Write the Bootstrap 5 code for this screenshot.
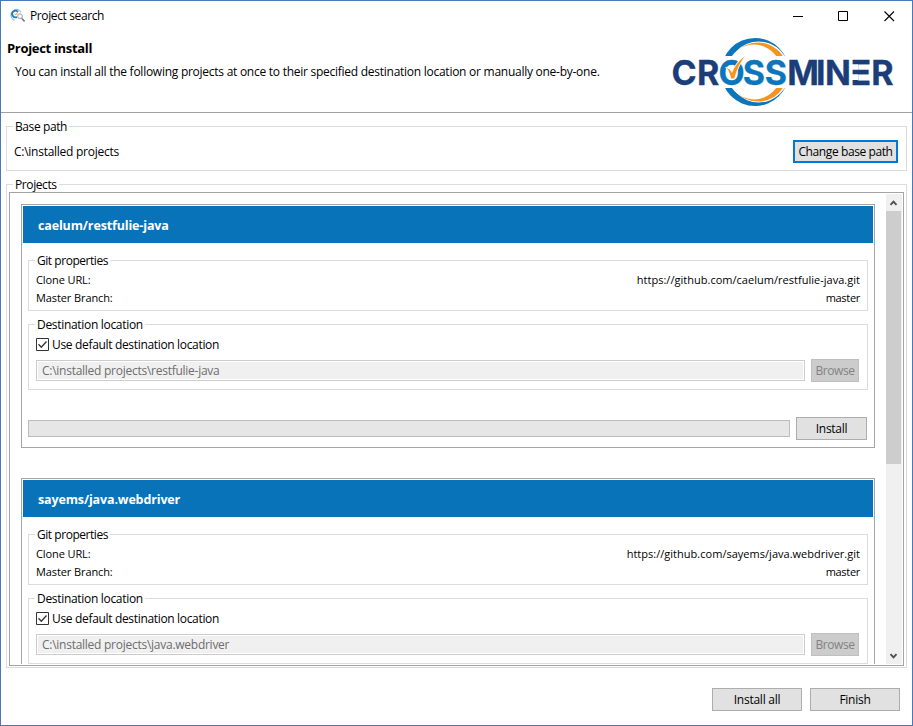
<!DOCTYPE html>
<html lang="en">
<head>
<meta charset="utf-8">
<title>Project search</title>
<link href="https://cdn.jsdelivr.net/npm/bootstrap@5.3.0/dist/css/bootstrap.min.css" rel="stylesheet">
<style>
  body { font: 12px/17px "Open Sans", "Noto Sans", sans-serif; color: #000; background: #fff; letter-spacing: -.26px; }
  .window { width: 913px; height: 726px; border: 1px solid #447abd; }
  .titlebar { height: 30px; padding: 0 17px 0 8px; line-height: 16px; }
  .titlebar span { letter-spacing: -.38px; }
  .app-icon { margin-right: 5px; }
  .win-controls { gap: 34px; }
  .win-close { margin-left: 1px; }
  .wizard-head { height: 82px; border-bottom: 1px solid #a0a0a0; padding: 9px 18px 0 6px; }
  .wizard-title { font-size: 13px; line-height: 16px; letter-spacing: -.32px; }
  .wizard-head p { margin: 8px 0 0 8px; line-height: 16px; }
  .logo-svg { margin-top: -4px; }
  .groupbox { border: 1px solid #dcdcdc; }
  .caption { display: block; width: max-content; line-height: 16px; height: 16px; margin: -8px 0 0 6px; padding: 0 2px; background: #fff; letter-spacing: -.4px; }
  .base-box { margin: 13px 5px 0; height: 45px; }
  .base-row { height: 23px; margin-top: 5px; padding: 0 8px 0 7px; }
  .projects-box { margin: 13px 5px 0; height: 484px; }
  .scroll-frame { position: relative; border: 1px solid #a3a3a8; margin: -1px 2px 0; height: 474px; padding: 1px; }
  .viewport { padding: 10px 11px 0 10px; }
  .push { height: 23px; border: 1px solid #adadad; background: #e1e1e1; color: #000; padding: 0; font: inherit; line-height: 21px; text-align: center; letter-spacing: inherit; }
  .push-focus { width: 105px; border: 2px solid #0078d7; line-height: 19px; letter-spacing: -.4px; }
  .push-install { width: 71px; }
  .push-browse { width: 48px; border-color: #bfbfbf; background: #ccc; color: #838383; letter-spacing: -.4px; }
  .push-foot { width: 90px; }
  .project { height: 244px; border: 1px solid #a5a5aa; padding: 1px; margin-bottom: 30px; flex: none; }
  .project-head { height: 37px; background: #0873b9; color: #fff; font-weight: 700; font-size: 12.5px; letter-spacing: -.14px; padding: 2px 0 0 15px; }
  .git-box { margin: 17px 5px 0; height: 51px; }
  .prop { height: 18px; padding: 0 7px; font-size: 11px; line-height: 15px; letter-spacing: .02px; }
  .prop-name { letter-spacing: -.1px; }
  .prop-branch { letter-spacing: -.3px; }
  .git-box .caption { margin-bottom: 3px; letter-spacing: -.46px; }
  .dest-box { margin: 13px 5px 0; height: 66px; }
  .dest-box .caption { letter-spacing: -.31px; }
  .check-row { height: 13px; margin: 5px 0 0 7px; gap: 3px; letter-spacing: -.33px; }
  .tick { width: 13px; height: 13px; display: block; }
  .dest-row { margin: 8px 8px 0 7px; gap: 6px; }
  .path-field { height: 21px; border: 1px solid #ccc; background: #f0f0f0; box-shadow: inset 0 0 0 1px #fff; color: #6d6d6d; padding: 0 5px; line-height: 19px; min-width: 0; }
  .action-row { margin: 27px 6px 0 5px; gap: 6px; }
  .install-bar { height: 17px; border: 1px solid #bcbcbc; background: #e6e6e6; border-radius: 0; }
  .scroll-track { width: 16px; background: #f0f0f0; }
  .scroll-cap { height: 17px; }
  .scroll-thumb { height: 253px; width: 15px; background: #cdcdcd; }
  .foot { margin-top: 20px; padding-right: 12px; gap: 8px; }
</style>
<script src="https://cdn.jsdelivr.net/npm/bootstrap@5.3.0/dist/js/bootstrap.bundle.min.js"></script>
</head>
<body>
<div class="window overflow-hidden">
  <div class="titlebar d-flex align-items-center justify-content-between">
    <div class="d-flex align-items-center">
      <svg class="app-icon" width="16" height="16" viewBox="0 0 16 16" fill="none">
        <path d="M10.300 2.200A5.600 5.600 0 1 0 5.500 12.300" stroke="#8fbfe0" stroke-width="1.300"/>
        <path d="M9 3.900A3.300 3.300 0 1 0 8 9" stroke="#1579bd" stroke-width="1.700"/>
        <path d="M5.600 5.500l1.200 1.600L9 3.500" stroke="#f39a35" stroke-width="1"/>
        <path d="M10.500 2a5 5 0 0 1 1 2.500" stroke="#7cb5dc"/>
        <circle cx="11" cy="8.200" r="2.400" fill="#f6f6f6" stroke="#a5a5a5"/>
        <path d="M12.700 10.200l2.900 3.200" stroke="#777" stroke-width="1.500"/>
      </svg>
      <span>Project search</span>
    </div>
    <div class="win-controls d-flex">
      <svg width="11" height="11"><path d="M0 5.500h10" stroke="#000"/></svg>
      <svg width="11" height="11"><path d="M.5 .5h9v9h-9z" fill="none" stroke="#000"/></svg>
      <svg class="win-close" width="11" height="11"><path d="M.5 .5l9.500 9.500M10 .5L.5 10" stroke="#000" stroke-width="1.100"/></svg>
    </div>
  </div>

  <header class="wizard-head d-flex justify-content-between">
    <div>
      <div class="wizard-title fw-bold">Project install</div>
      <p>You can install all the following projects at once to their specified destination location or manually one-by-one.</p>
    </div>
    <svg class="logo-svg flex-shrink-0" width="222" height="72" viewBox="672 36 222 72">
      <defs>
        <clipPath id="caps"><path d="M715 30h80v26h-80zM715 88h80v24h-80z"/></clipPath>
      </defs>
      <g clip-path="url(#caps)">
        <circle cx="755" cy="72" r="34" fill="#0b76bb"/>
        <circle cx="758.700" cy="72" r="30.500" fill="#fff"/>
        <circle cx="758" cy="72" r="29.600" fill="#f7941e"/>
        <circle cx="754" cy="72" r="27.400" fill="#fff"/>
      </g>
      <text y="84.600" x="671.500 697 718.600 742.800 764.800 787.300 816 825 850.500 871.200" font-family="Inter, sans-serif" font-weight="700" font-size="34" fill="#1b3d78" stroke="#1b3d78" stroke-width=".3" letter-spacing="0">CR<tspan fill="#0b76bb" stroke="#0b76bb">OSS</tspan>MINER</text>
      <path d="M851 64.300h7v5.500h-7zM851 74.300h7v5.800h-7z" fill="#fff"/>
      <path d="M727 68c2.500 1 4 2.800 5 5 2.500-6.500 6.500-12 12.500-16.500-5 7-8 13.500-10.300 22h-3c-.8-4-2-7.500-4.500-10.500z" fill="#f7941e" stroke="#fff" stroke-width="1.600" paint-order="stroke"/>
    </svg>
  </header>

  <section class="groupbox base-box">
    <span class="caption">Base path</span>
    <div class="base-row d-flex align-items-center justify-content-between">
      <span>C:\installed projects</span>
      <button class="push push-focus" type="button">Change base path</button>
    </div>
  </section>

  <section class="groupbox projects-box">
    <span class="caption">Projects</span>
    <div class="scroll-frame d-flex">
      <div class="viewport d-flex flex-column flex-grow-1 overflow-hidden">
        <article class="project">
          <div class="project-head d-flex align-items-center">caelum/restfulie-java</div>
          <div class="groupbox git-box">
            <span class="caption">Git properties</span>
            <div class="prop d-flex justify-content-between"><span class="prop-name">Clone URL:</span><span>https://github.com/caelum/restfulie-java.git</span></div>
            <div class="prop d-flex justify-content-between"><span class="prop-name">Master Branch:</span><span class="prop-branch">master</span></div>
          </div>
          <div class="groupbox dest-box">
            <span class="caption">Destination location</span>
            <div class="check-row d-flex align-items-center">
              <svg class="tick" viewBox="0 0 13 13"><path d="M.5.5h12v12H.5z" fill="#fff" stroke="#333"/><path d="M2.500 6.300l2.800 2.900 5.200-5.700" fill="none" stroke="#333" stroke-width="1.300"/></svg>
              <span>Use default destination location</span>
            </div>
            <div class="dest-row d-flex align-items-center">
              <div class="path-field flex-grow-1">C:\installed projects\restfulie-java</div>
              <button class="push push-browse" type="button" disabled>Browse</button>
            </div>
          </div>
          <div class="action-row d-flex align-items-center">
            <div class="progress install-bar flex-grow-1"></div>
            <button class="push push-install" type="button">Install</button>
          </div>
        </article>
        <article class="project">
          <div class="project-head d-flex align-items-center">sayems/java.webdriver</div>
          <div class="groupbox git-box">
            <span class="caption">Git properties</span>
            <div class="prop d-flex justify-content-between"><span class="prop-name">Clone URL:</span><span>https://github.com/sayems/java.webdriver.git</span></div>
            <div class="prop d-flex justify-content-between"><span class="prop-name">Master Branch:</span><span class="prop-branch">master</span></div>
          </div>
          <div class="groupbox dest-box">
            <span class="caption">Destination location</span>
            <div class="check-row d-flex align-items-center">
              <svg class="tick" viewBox="0 0 13 13"><path d="M.5.5h12v12H.5z" fill="#fff" stroke="#333"/><path d="M2.500 6.300l2.800 2.900 5.200-5.700" fill="none" stroke="#333" stroke-width="1.300"/></svg>
              <span>Use default destination location</span>
            </div>
            <div class="dest-row d-flex align-items-center">
              <div class="path-field flex-grow-1">C:\installed projects\java.webdriver</div>
              <button class="push push-browse" type="button" disabled>Browse</button>
            </div>
          </div>
        </article>
      </div>
      <div class="scroll-track d-flex flex-column">
        <svg class="scroll-cap flex-shrink-0" width="16" height="17"><path d="M4.500 10.800L7.500 7.600l3 3.200" fill="none" stroke="#505050" stroke-width="1.900"/></svg>
        <div class="scroll-thumb"></div>
        <svg class="scroll-cap flex-shrink-0 mt-auto" width="16" height="17"><path d="M4.500 7.200l3 3.200 3-3.200" fill="none" stroke="#505050" stroke-width="1.900"/></svg>
      </div>
    </div>
  </section>

  <footer class="foot d-flex justify-content-end">
    <button class="push push-foot" type="button">Install all</button>
    <button class="push push-foot" type="button">Finish</button>
  </footer>
</div>
</body>
</html>
